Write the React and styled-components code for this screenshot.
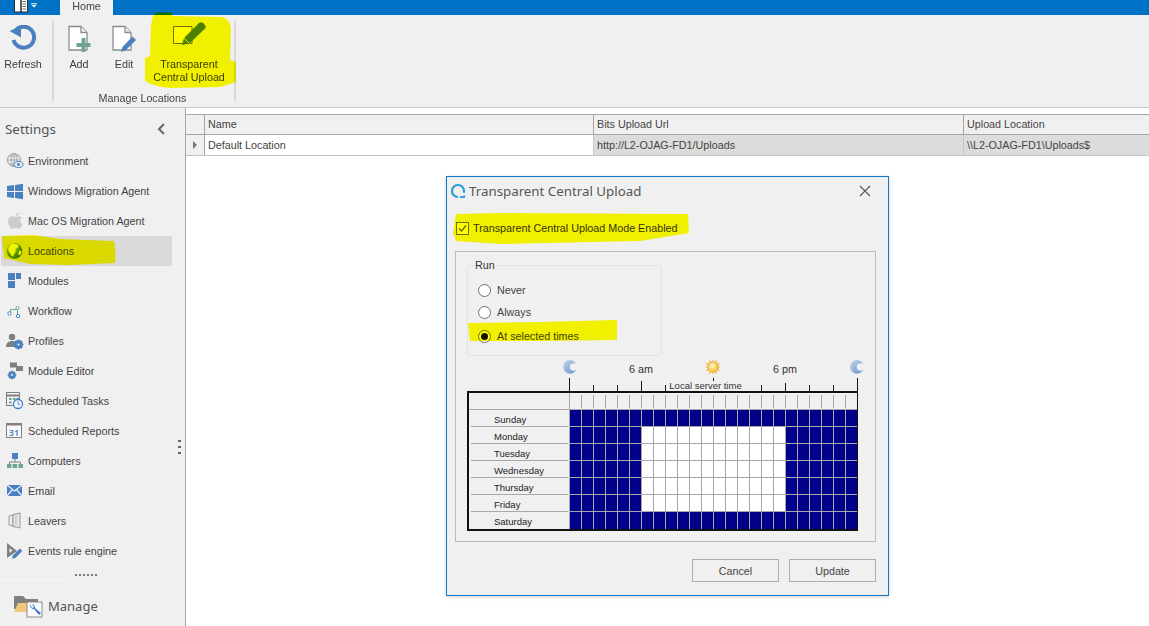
import React from "react";
import styled, { createGlobalStyle } from "styled-components";

const Global = createGlobalStyle`
  html, body { margin: 0; padding: 0; background: #fff; }
  body { font-family: "Liberation Sans", Arial, sans-serif; font-size: 10.75px; color: #3c3c3c; }
  * { box-sizing: border-box; }
`;

const Page = styled.div`
  width: 1149px; height: 626px; overflow: hidden; display: flex; flex-direction: column; background: #fff;
`;
const TitleBar = styled.div`
  height: 15px; flex: none; background: #0072c6; display: flex; padding-left: 13px;
`;
const AppButton = styled.div`width: 47px; display: flex; align-items: flex-start;`;
const HomeTab = styled.div`
  width: 53px; height: 15px; background: #f0f0f0; color: #444; text-align: center; line-height: 13px;
`;
const Ribbon = styled.div`
  position: relative; height: 93px; flex: none; background: #f0f0f0; border-bottom: 1px solid #c6c6c6;
  display: flex; padding-top: 6px;
`;
const Group = styled.div`
  height: 80px; display: flex; flex-direction: column; border-right: 2px solid #d8d8d8;
  width: ${p => p.$w}px;
`;
const GroupButtons = styled.div`display: flex;`;
const GroupLabel = styled.div`
  margin-top: auto; margin-bottom: -4px; padding-right: 3px; text-align: center; line-height: 13px; color: #444;
`;
const RibbonButton = styled.div`
  width: ${p => p.$w}px; display: flex; flex-direction: column; align-items: center; padding-top: 2px;
  color: #3c3c3c; text-align: center; line-height: 13px;
`;
const IconSlot = styled.div`height: 31px; margin-bottom: 4px; display: flex; align-items: center; justify-content: center;`;
const Mark = styled.svg`
  position: absolute; left: ${p => p.$x}px; top: ${p => p.$y}px; mix-blend-mode: multiply; pointer-events: none; overflow: visible;
`;
const Body = styled.div`flex: 1; display: flex; min-height: 0;`;
const Sidebar = styled.aside`
  position: relative; width: 186px; flex: none; background: #f0f0f0; border-right: 1px solid #a6a6a6; display: flex;
`;
const SideColumn = styled.div`width: 172px; display: flex; flex-direction: column;`;
const SideHeader = styled.div`
  height: 38px; padding: 3px 6px 0 5px; display: flex; align-items: center; justify-content: space-between;
  font-family: "Noto Sans", sans-serif; font-size: 13.4px; color: #555;
`;
const SideItem = styled.div`
  height: 30px; margin-left: 1px; padding-left: 5px; display: flex; align-items: center; gap: 4px;
  background: ${p => (p.$selected ? "#d9d9d9" : "transparent")};
  color: #444;
`;
const ItemIcon = styled.svg`width: 18px; height: 18px; flex: none;`;
const MoreDots = styled.div`
  margin: 8px 0 0 75px; width: 23px; height: 2px;
  background: repeating-linear-gradient(90deg, #777 0 2px, transparent 2px 4px);
`;
const SideRule = styled.div`margin-top: 4px; width: 64px; height: 1px; background: #f8f8f8;`;
const ManageRow = styled.div`
  display: flex; align-items: center; padding: 11px 0 0 14px; gap: 5px;
  font-family: "Noto Sans", sans-serif; font-size: 13px; color: #555;
`;
const Grip = styled.div`
  width: 3px; height: 14px; margin: 332px 0 0 5.5px;
  background: repeating-linear-gradient(180deg, #666 0 2px, transparent 2px 6px);
`;
const Main = styled.main`position: relative; flex: 1; padding-top: 6px; background: #fff;`;
const DataGrid = styled.div`
  display: grid; grid-template-columns: 18px 389px 370px 1fr; border-top: 1px solid #a6a6a6;
`;
const HeadCell = styled.div`
  height: 20px; background: #f0f0f0; border-bottom: 1px solid #a6a6a6; padding-left: 3px; line-height: 18px; color: #444;
  border-left: ${p => (p.$first ? "none" : "1px solid #a6a6a6")};
`;
const RowCell = styled.div`
  height: 21px; padding-left: 3px; line-height: 20px; color: #444; border-bottom: 1px solid #c4c4c4;
  background: ${p => p.$bg};
  border-left: ${p => (p.$first ? "none" : p.$line ? "1px solid #c4c4c4" : "1px solid #a6a6a6")};
`;
const RowArrow = styled.div`
  width: 0; height: 0; margin: 6px 0 0 4px; border-left: 4px solid #777; border-top: 4px solid transparent; border-bottom: 4px solid transparent;
`;
const Dialog = styled.section`
  position: absolute; left: 260px; top: 68px; width: 443px; height: 420px; background: #f0f0f0;
  border: 1px solid #0f78c8; box-shadow: 0 1px 4px rgba(0,0,0,.18); padding: 0 12px 0 8px;
`;
const DialogTitle = styled.div`
  height: 27px; margin-left: -5px; display: flex; align-items: center; gap: 3px;
  font-family: "Noto Sans", sans-serif; font-size: 13.3px; color: #555;
`;
const CloseBtn = styled.svg`margin-left: auto; margin-right: 5px; width: 12px; height: 12px;`;
const CheckRow = styled.label`
  height: 16px; margin: 16px 0 0 1px; display: flex; align-items: center; gap: 4px; color: #333;
`;
const Box = styled.span`
  width: 13px; height: 13px; border: 1px solid #707070; background: #fff; display: flex; align-items: center; justify-content: center;
`;
const Panel = styled.div`
  margin-top: 15px; height: 291px; border: 1px solid #bcbcbc; padding: 13px 11px 0 11px;
`;
const RunGroup = styled.fieldset`
  width: 195px; height: 97px; margin: -6px 0 0; padding: 0 0 0 10px; border: 1px solid #dde4ea; border-radius: 3px;
  display: flex; flex-direction: column;
`;
const RunLegend = styled.legend`padding: 0 2px 0 1px; margin-left: -4px; line-height: 12px; color: #333;`;
const RadioRow = styled.div`
  height: 14px; margin-top: ${p => p.$mt}px; display: flex; align-items: center; gap: 6px; color: #444;
`;
const Radio = styled.span`
  width: 13px; height: 13px; border-radius: 50%; border: 1px solid #707070; background: #fff; display: flex; align-items: center; justify-content: center;
  &::after { content: ""; width: 7px; height: 7px; border-radius: 50%; background: ${p => (p.$on ? "#111" : "transparent")}; }
`;
const TimeScale = styled.div`
  display: grid; grid-template-columns: 102px repeat(24, 12px); grid-template-rows: 22px 13px; width: 390px;
`;
const ScaleText = styled.div`
  grid-row: 1; grid-column: ${p => p.$col}; justify-self: center; align-self: end; line-height: 14px; color: #333; margin-bottom: 2px;
`;
const ScaleIcon = styled.svg`
  grid-row: 1; grid-column: ${p => p.$col}; justify-self: ${p => p.$j || "center"}; align-self: end; width: 16px; height: 16px; margin-bottom: 3px;
  margin-right: ${p => p.$mr || 0}px;
`;
const Ticks = styled.svg`grid-row: 2; grid-column: 2 / 26; width: 289px; height: 13px; overflow: visible;`;
const ScaleCaption = styled.div`
  grid-row: 2; grid-column: 2 / 26; justify-self: center; margin-left: -15px; align-self: end; padding: 0 2px;
  height: 10px; background: #f0f0f0; font-size: 9.5px; line-height: 10px; color: #333; position: relative;
`;
const Schedule = styled.div`
  display: grid; grid-template-columns: 100px repeat(24, 12px); grid-auto-rows: 17px; width: 391px;
  border: 2px solid #111; border-right-width: 1.5px;
`;
const CornerCell = styled.div`border-bottom: 1px solid #a8a8a8;`;
const TickCell = styled.div`
  border-bottom: 1px solid #a8a8a8; padding-top: 2px;
  &::before { content: ""; display: block; width: 1px; height: ${p => (p.$first ? 16 : 13)}px; margin-top: ${p => (p.$first ? -2 : 0)}px; background: #a8a8a8; }
`;
const DayCell = styled.div`
  margin-left: 2px; padding-left: 23px; line-height: 20px; height: 17px; font-size: 9.5px; color: #222;
  border-bottom: ${p => (p.$last ? "none" : "1px solid #a8a8a8")}; margin-right: 1px;
`;
const SlotCell = styled.div`
  background: ${p => (p.$on ? "#00008b" : "#fff")};
  border-left: 1px solid #a8a8a8; border-bottom: ${p => (p.$last ? "none" : "1px solid #a8a8a8")};
`;
const DialogFooter = styled.div`display: flex; justify-content: flex-end; gap: 10px; margin-top: 17px;`;
const FootButton = styled.button`
  width: 87px; height: 23px; padding: 1px 0 0; background: #f0f0f0; border: 1px solid #adadad; font: inherit; color: #444;
`;

const blue = "#4a80bf", grey = "#808080", teal = "#6fa595";

const I = ({ children }) => <ItemIcon viewBox="0 0 18 18">{children}</ItemIcon>;
const icons = {
  env: <I><circle cx="8" cy="8" r="6.5" fill="none" stroke="#999" /><path d="M1.5 8h13M8 1.5v13M3 4h10M3 12h10" stroke="#aaa" fill="none" /><ellipse cx="8" cy="8" rx="3" ry="6.5" fill="none" stroke="#aaa" /><ellipse cx="12.5" cy="12.5" rx="4.5" ry="3" fill="#e8eef5" stroke={blue} /><circle cx="12.5" cy="12.5" r="1.4" fill={blue} /></I>,
  win: <I><path d="M1 4l7-1v6H1zM9 3l8-1.2V9H9zM1 10h7v6l-7-1zM9 10h8v7.2L9 16z" fill={blue} /></I>,
  mac: <I><path d="M13 .5c0 2-1.600 3.600-3.300 3.500C9.600 2.300 11.300.600 13 .5zM9.600 5c1 0 2-.800 3.400-.800 1.300 0 2.400.600 3 1.600-2.600 1.500-2.200 5.200.5 6.200-.8 2-2.300 5-4 5-1 0-1.500-.7-2.800-.7s-1.800.7-2.800.7C4.700 17 2 12.500 2 9.200 2 6 4 4.300 6 4.300c1.400 0 2.600.700 3.600.700z" fill="#c9cdcf" /></I>,
  loc: <I><defs><radialGradient id="g1" cx=".35" cy=".3" r=".8"><stop offset="0" stopColor="#d8ecff" /><stop offset=".6" stopColor="#4f8fd0" /><stop offset="1" stopColor="#2a6ab0" /></radialGradient></defs><circle cx="8.500" cy="9" r="7.800" fill="url(#g1)" /><path d="M6 2c3-.5 6 .5 6.500 2 .5 2-2.500 1.500-3 3.500-.5 2 .5 2.500-1 4-1 1-1 2.500-1.500 3.500C4.500 13.500 4.500 11 3 9.500 1.500 8 3 3.500 6 2zM14 8.500c1.500 0 2 2 .5 4-1 1-2 1-2-.5 0-1.500.5-3.500 1.500-3.500z" fill="#eef5b0" /></I>,
  mod: <I><path d="M2 1h7v7H2zM10 1h5v6h-5zM2 9h7v7H2z" fill={blue} /></I>,
  flow: <I><path d="M4.500 11V7.500h7V13" fill="none" stroke={teal} /><circle cx="3.500" cy="11.500" r="1.700" fill="#fff" stroke={blue} /><circle cx="11.500" cy="6" r="1.500" fill="#fff" stroke={teal} /><circle cx="12" cy="14" r="1.700" fill="#fff" stroke={blue} /></I>,
  prof: <I><circle cx="6" cy="5" r="3.200" fill={grey} /><path d="M0 15c0-4 2.500-6 6-6 2 0 3 .5 4 1.500V15z" fill={grey} /><circle cx="12.500" cy="12.500" r="3.300" fill="none" stroke={blue} strokeWidth="2.600" /><path d="M12.500 7.500v10M7.500 12.500h10M9 9l7 7M16 9l-7 7" stroke={blue} strokeWidth="1.200" /><circle cx="12.500" cy="12.500" r="1" fill="#fff" /></I>,
  edit: <I><path d="M4 .5h7v5H4zM10 4h7v5h-7z" fill={grey} /><circle cx="6" cy="13" r="2.600" fill="none" stroke={blue} strokeWidth="2.400" /><path d="M6 8.500v9M1.500 13h9M3 10l6 6M9 10l-6 6" stroke={blue} strokeWidth="1.100" /><circle cx="6" cy="13" r=".9" fill="#fff" /></I>,
  tasks: <I><rect x=".5" y=".5" width="13" height="13" fill="#f4f4f4" stroke={grey} /><path d="M.5 3.500h13" stroke={grey} strokeWidth="2" /><path d="M3 6h2.500v2H3zM7 6h2.500v2H7zM3 9.500h2.500v2H3z" fill={teal} /><circle cx="12" cy="12" r="4.500" fill="#f4f8fc" stroke={blue} strokeWidth="1.300" /><path d="M12 9.500V12l2 1M10.500 6.500h3" fill="none" stroke={blue} /></I>,
  rep: <I><rect x=".5" y="1.500" width="15" height="14" fill="#fafafa" stroke={grey} /><rect x="0" y="1" width="16" height="2.500" fill={grey} /><text x="8" y="13.500" fontSize="9" fontWeight="600" textAnchor="middle" fill={blue} fontFamily="Noto Sans">31</text></I>,
  comp: <I><rect x="6" y="1" width="6" height="6" fill={blue} /><path d="M9 7v3M3.500 12v-2h11v2" fill="none" stroke={grey} /><path d="M1 12h4.500v4H1zM6.700 12h4.500v4H6.700zM12.500 12H17v4h-4.500z" fill={teal} /></I>,
  mail: <I><rect x="1" y="3" width="15" height="11" fill={blue} /><path d="M1 3l7.500 6L16 3M1 14l5.500-6.500M16 14l-5.500-6.500" fill="none" stroke="#e8eef5" strokeWidth="1.200" /></I>,
  leav: <I><path d="M3 4l4-1v11l-4-1z" fill="#eee" stroke="#999" /><path d="M7 2.500l7-1.500v15l-7-1.500z" fill="#e6e6e6" stroke="#999" /><path d="M10 3v11" stroke="#bbb" /></I>,
  ev: <I><path d="M1 1l10 8-10 7z" fill={grey} /><path d="M3.500 6v5l3-2.500z" fill="#eee" /><path d="M6 16.500l.800-3 7-7 2.500 2.500-7 7z" fill={blue} /></I>,
};
const items = [
  ["Environment", "env"], ["Windows Migration Agent", "win"], ["Mac OS Migration Agent", "mac"], ["Locations", "loc", true],
  ["Modules", "mod"], ["Workflow", "flow"], ["Profiles", "prof"], ["Module Editor", "edit"], ["Scheduled Tasks", "tasks"],
  ["Scheduled Reports", "rep"], ["Computers", "comp"], ["Email", "mail"], ["Leavers", "leav"], ["Events rule engine", "ev"],
];

const days = ["Sunday", "Monday", "Tuesday", "Wednesday", "Thursday", "Friday", "Saturday"];
const hours = Array.from({ length: 24 }, (_, i) => i);

const Moon = ({ col, j, mr }) => (
  <ScaleIcon viewBox="0 0 16 16" $col={col} $j={j} $mr={mr}>
    <defs><linearGradient id="mg" x1="0" y1="0" x2="1" y2="1"><stop offset="0" stopColor="#c3d6ee" /><stop offset="1" stopColor="#5f8fc8" /></linearGradient></defs>
    <circle cx="8" cy="8" r="6.700" fill="url(#mg)" stroke="#b6c8dc" strokeWidth=".5" />
    <circle cx="11.500" cy="8" r="3.700" fill="#f0f0f0" />
  </ScaleIcon>
);
const Sun = () => (
  <ScaleIcon viewBox="0 0 16 16" $col="2 / 26">
    <defs><radialGradient id="sg" cx=".45" cy=".4" r=".6"><stop offset="0" stopColor="#fffbd0" /><stop offset="1" stopColor="#f6c230" /></radialGradient></defs>
    <path d="M8 0l1 3 3-2-.5 3.500L15 4l-2 3 3 1-3 1 2 3-3.500-.5.500 3.500-3-2-1 3-1-3-3 2 .5-3.500L1 12l2-3-3-1 3-1-2-3 3.500.5L4 1l3 2z" fill="#eeb744" />
    <circle cx="8" cy="8" r="4.600" fill="url(#sg)" />
  </ScaleIcon>
);

export default function App() {
  return (
    <Page>
      <Global />
      <TitleBar>
        <AppButton>
          <svg width="25" height="13" viewBox="0 0 25 13">
            <path d="M1.500 -1h6.500v13H1.500zM8 -1h6.500v13H8z" fill="#fff" stroke="#2b2b2b" />
            <path d="M9.500 1.500h3.500M9.500 4h3.500M9.500 6.500h3.500M9.500 9h3.500" stroke="#666" />
            <path d="M18 3.800h6" stroke="#fff" />
            <path d="M18.500 5h5l-2.500 2.500z" fill="#fff" />
          </svg>
        </AppButton>
        <HomeTab>Home</HomeTab>
      </TitleBar>
      <Ribbon>
        <Group $w={54}>
          <RibbonButton $w={46}>
            <IconSlot>
              <svg width="28" height="28" viewBox="0 0 28 28">
                <path d="M6.500 5.500A10.500 10.500 0 1 1 4.500 15" fill="none" stroke={blue} strokeWidth="4" />
                <path d="M.5 6L12 1v11.500z" fill={blue} />
              </svg>
            </IconSlot>
            Refresh
          </RibbonButton>
        </Group>
        <Group $w={182}>
          <GroupButtons>
            <RibbonButton $w={50}>
              <IconSlot>
                <svg width="24" height="28" viewBox="0 0 24 28">
                  <path d="M2 1.500h12l6 6V25H2z" fill="#fff" stroke="#8c8c8c" strokeWidth="1.300" />
                  <path d="M14 1.500v6h6" fill="#eee" stroke="#8c8c8c" strokeWidth="1.300" />
                  <path d="M15 15h4v5h5v4h-5v5h-4v-5h-5v-4h5z" transform="translate(-.5 -2)" fill={teal} />
                </svg>
              </IconSlot>
              Add
            </RibbonButton>
            <RibbonButton $w={40}>
              <IconSlot>
                <svg width="26" height="28" viewBox="0 0 26 28">
                  <path d="M2 1.500h12l6 6V25H2z" fill="#fff" stroke="#8c8c8c" strokeWidth="1.300" />
                  <path d="M14 1.500v6h6" fill="#eee" stroke="#8c8c8c" strokeWidth="1.300" />
                  <path d="M10 27l1.500-5 10-10.500 3.500 3.500L14.500 25.500z" fill={blue} />
                </svg>
              </IconSlot>
              Edit
            </RibbonButton>
            <RibbonButton $w={90}>
              <IconSlot>
                <svg width="36" height="28" viewBox="0 0 36 28" style={{ overflow: "visible" }}>
                  <path d="M2.500 1.500h18.500v17h-18.500z" fill="#fffb70" stroke="#707070" />
                  <path d="M11 20l2-7L28 -2Q30 -3.500 32 -2L34 0Q35.500 2 34 3.500L18.500 18.500z" fill={blue} />
                  <path d="M13 13l5.500 5.500" stroke="#fff" strokeWidth=".8" />
                </svg>
              </IconSlot>
              Transparent<br />Central Upload
            </RibbonButton>
          </GroupButtons>
          <GroupLabel>Manage Locations</GroupLabel>
        </Group>
        <Mark $x={145} $y={-3} width="92" height="77" viewBox="145 12 92 77">
          <path d="M153 15.500L157 12.500H171L173 16L222 17Q230 19 231 28L230 60L236 62L236 82L220 87L170 88Q150 86 145 80L145 58L150 56L151 25Z" fill="#ffff00" />
        </Mark>
      </Ribbon>
      <Body>
        <Sidebar>
          <SideColumn>
            <SideHeader>
              Settings
              <svg width="10" height="12" viewBox="0 0 10 12"><path d="M8 1L3 6l5 5" fill="none" stroke="#666" strokeWidth="2" /></svg>
            </SideHeader>
            {items.map(([label, icon, sel]) => (
              <SideItem key={label} $selected={sel}>{icons[icon]}{label}</SideItem>
            ))}
            <MoreDots />
            <SideRule />
            <ManageRow>
              <svg width="29" height="28" viewBox="0 0 29 28">
                <path d="M0 4h9l3 3h12v10H0z" fill="#7f7f7f" />
                <path d="M0 20l4-9h18l-4 9z" fill="#f0c87a" />
                <rect x="13" y="10" width="15" height="15" fill="#fbfbfb" stroke="#8a8a8a" />
                <path d="M16 12a4 4 0 0 0 4 5l5 6 2-2-6-5a4 4 0 0 0-3-4l2 3-2 1z" fill={blue} />
              </svg>
              Manage
            </ManageRow>
          </SideColumn>
          <Grip />
          <Mark $x={0} $y={126} width="116" height="34" viewBox="0 234 116 34">
            <path d="M2 236L34 235L60 239L114 241Q116 250 115 263L70 265L30 264L4 258Z" fill="#ffff00" />
          </Mark>
        </Sidebar>
        <Main>
          <DataGrid>
            <HeadCell $first />
            <HeadCell>Name</HeadCell>
            <HeadCell>Bits Upload Url</HeadCell>
            <HeadCell>Upload Location</HeadCell>
            <RowCell $first $bg="#f0f0f0"><RowArrow /></RowCell>
            <RowCell $bg="#fff">Default Location</RowCell>
            <RowCell $bg="#dcdcdc" $line>http://L2-OJAG-FD1/Uploads</RowCell>
            <RowCell $bg="#dcdcdc" $line>\\L2-OJAG-FD1\Uploads$</RowCell>
          </DataGrid>
          <Dialog>
            <DialogTitle>
              <svg width="16" height="16" viewBox="0 0 18 18">
                <path d="M9 15.800A6.800 6.800 0 1 1 15.800 9V11" fill="none" stroke="#2a9ad8" strokeWidth="2.400" />
                <path d="M11 15.800h5V14" fill="none" stroke="#2a9ad8" strokeWidth="2" />
              </svg>
              Transparent Central Upload
              <CloseBtn viewBox="0 0 12 12"><path d="M1 1l10 10M11 1L1 11" stroke="#555" strokeWidth="1.100" /></CloseBtn>
            </DialogTitle>
            <CheckRow>
              <Box><svg width="9" height="9" viewBox="0 0 9 9"><path d="M1 4.500l2.500 2.500L8 1.500" fill="none" stroke="#666" strokeWidth="1.300" /></svg></Box>
              Transparent Central Upload Mode Enabled
            </CheckRow>
            <Panel>
              <RunGroup>
                <RunLegend>Run</RunLegend>
                <RadioRow $mt={12}><Radio />Never</RadioRow>
                <RadioRow $mt={8}><Radio />Always</RadioRow>
                <RadioRow $mt={10}><Radio $on />At selected times</RadioRow>
              </RunGroup>
              <TimeScale>
                <Moon col="1" j="end" mr={-9} />
                <ScaleText $col="2 / 14">6 am</ScaleText>
                <Sun />
                <ScaleText $col="14 / 26">6 pm</ScaleText>
                <Moon col="25" j="end" mr={-8} />
                <Ticks viewBox="0 0 289 13">
                  <path d="M.5 0v13M72.500 3v10M144.500 0v13M216.500 5v8M288.500 0v13M24.500 7v6M48.500 7v6M96.500 7v6M120.500 7v6M168.500 7v6M192.500 7v6M240.500 7v6M264.500 7v6" stroke="#111" fill="none" />
                </Ticks>
                <ScaleCaption>Local server time</ScaleCaption>
              </TimeScale>
              <Schedule>
                <CornerCell />
                {hours.map(h => <TickCell key={h} $first={h === 0} />)}
                {days.map((d, r) => (
                  <React.Fragment key={d}>
                    <DayCell $last={r === 6}>{d}</DayCell>
                    {hours.map(h => (
                      <SlotCell key={h} $last={r === 6} $on={r === 0 || r === 6 || h < 6 || h >= 18} />
                    ))}
                  </React.Fragment>
                ))}
              </Schedule>
            </Panel>
            <DialogFooter>
              <FootButton>Cancel</FootButton>
              <FootButton>Update</FootButton>
            </DialogFooter>
            <Mark $x={6} $y={35} width="236" height="32" viewBox="453 211 236 32">
              <path d="M456 213L500 212L688 213L689 232L640 240L500 243L456 240L453 232Z" fill="#ffff00" />
            </Mark>
            <Mark $x={21} $y={143} width="150" height="21" viewBox="468 319 150 21">
              <path d="M468 322L540 321L617 319L617 339L540 340L470 340Z" fill="#ffff00" />
            </Mark>
          </Dialog>
        </Main>
      </Body>
    </Page>
  );
}
